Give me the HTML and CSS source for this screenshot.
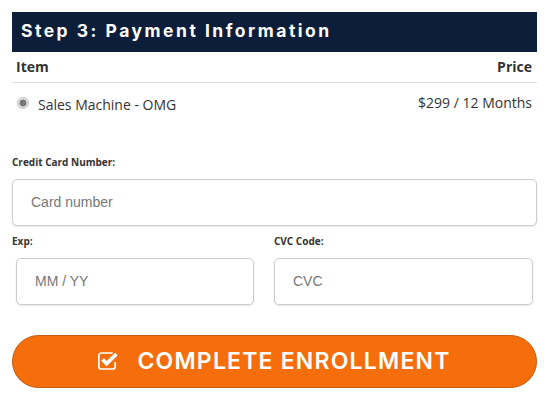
FILE: index.html
```html
<!DOCTYPE html>
<html lang="en">
<head>
<meta charset="utf-8">
<title>Payment Information</title>
<link rel="stylesheet" href="styles.css">
</head>
<body>
<main class="page">
  <h2 class="step">Step 3: Payment Information</h2>
  <div class="row head"><span>Item</span><span>Price</span></div>
  <div class="row product">
    <label class="pick"><input type="radio" class="radio" checked><span>Sales Machine - OMG</span></label>
    <span class="price">$299 / 12 Months</span>
  </div>
  <div class="field card">
    <label class="lbl">Credit Card Number:</label>
    <div class="box box-card">Card number</div>
  </div>
  <div class="split">
    <div class="field">
      <label class="lbl">Exp:</label>
      <div class="box box-sm exp">MM / YY</div>
    </div>
    <div class="field">
      <label class="lbl">CVC Code:</label>
      <div class="box box-sm">CVC</div>
    </div>
  </div>
  <button class="cta" type="button">
    <svg class="cta-icon" width="21" height="18" viewBox="0 0 21 18" aria-hidden="true">
      <path d="M17.200 10v4.500a2.500 2.500 0 0 1-2.500 2.500H3.300a2.500 2.500 0 0 1-2.500-2.500V3.500a2.500 2.500 0 0 1 2.500-2.500h11.400" fill="none" stroke="#fff" stroke-width="1.700"/>
      <path d="M4.600 7.500l4 4 9.900-9.500" fill="none" stroke="#fff" stroke-width="3.800"/>
    </svg>
    <span>COMPLETE ENROLLMENT</span>
  </button>
</main>
</body>
</html>
```
FILE: styles.css
```css
* { box-sizing: border-box; }
html, body { margin: 0; background: #fff; }
.page { width: 552px; height: 406px; padding: 12px 15px 0 12px; overflow: hidden; font-family: "Open Sans", sans-serif; color: #333; }
.step { margin: 0; height: 40px; background: #0d1e3b; color: #fff; padding-left: 9px; font: 700 17.500px/38px Inter, sans-serif; letter-spacing: 2.500px; }
.row { display: flex; justify-content: space-between; padding: 0 5px 0 4px; }
.head { height: 31px; border-bottom: 1px solid #ddd; font-size: 14px; font-weight: 700; line-height: 30px; }
.product { height: 73px; padding-left: 5px; font-size: 14px; }
.pick { display: flex; align-items: flex-start; gap: 9px; padding-top: 12px; line-height: 20px; }
.radio { appearance: none; width: 12px; height: 12px; margin: 2px 0 0; border: 1px solid #c4c4c4; border-radius: 50%; background: radial-gradient(circle, #777 0 3px, #e4e4e4 4px); }
.price { padding-top: 10px; line-height: 20px; }
.lbl { display: block; font-size: 10px; font-weight: 700; line-height: 12px; color: #333; }
.card .lbl { margin-bottom: 11px; }
.box { display: flex; align-items: center; background: #fff; border: 1px solid #ccc; border-radius: 5px; box-shadow: 0 1px 2px rgba(0,0,0,.1); color: #777; font-family: "Liberation Sans", sans-serif; }
.box-card { height: 47px; padding: 0 0 2px 18px; font-size: 14px; }
.box-sm { height: 47px; padding: 0 0 2px 18px; font-size: 14px; }
.split { display: grid; grid-template-columns: 242px 259px; gap: 20px; margin-top: 9px; }
.split .lbl { margin-bottom: 11px; }
.exp { margin-left: 4px; }
.cta { display: flex; align-items: center; justify-content: center; gap: 18px; width: 525px; height: 53px; margin-top: 30px; padding: 0; background: #f66d0b; border: 1px solid #c65a10; border-radius: 27px; color: #fff; font: 600 23px/1 Inter, sans-serif; letter-spacing: 1.200px; }
.cta-icon { margin-bottom: 2px; }
```
